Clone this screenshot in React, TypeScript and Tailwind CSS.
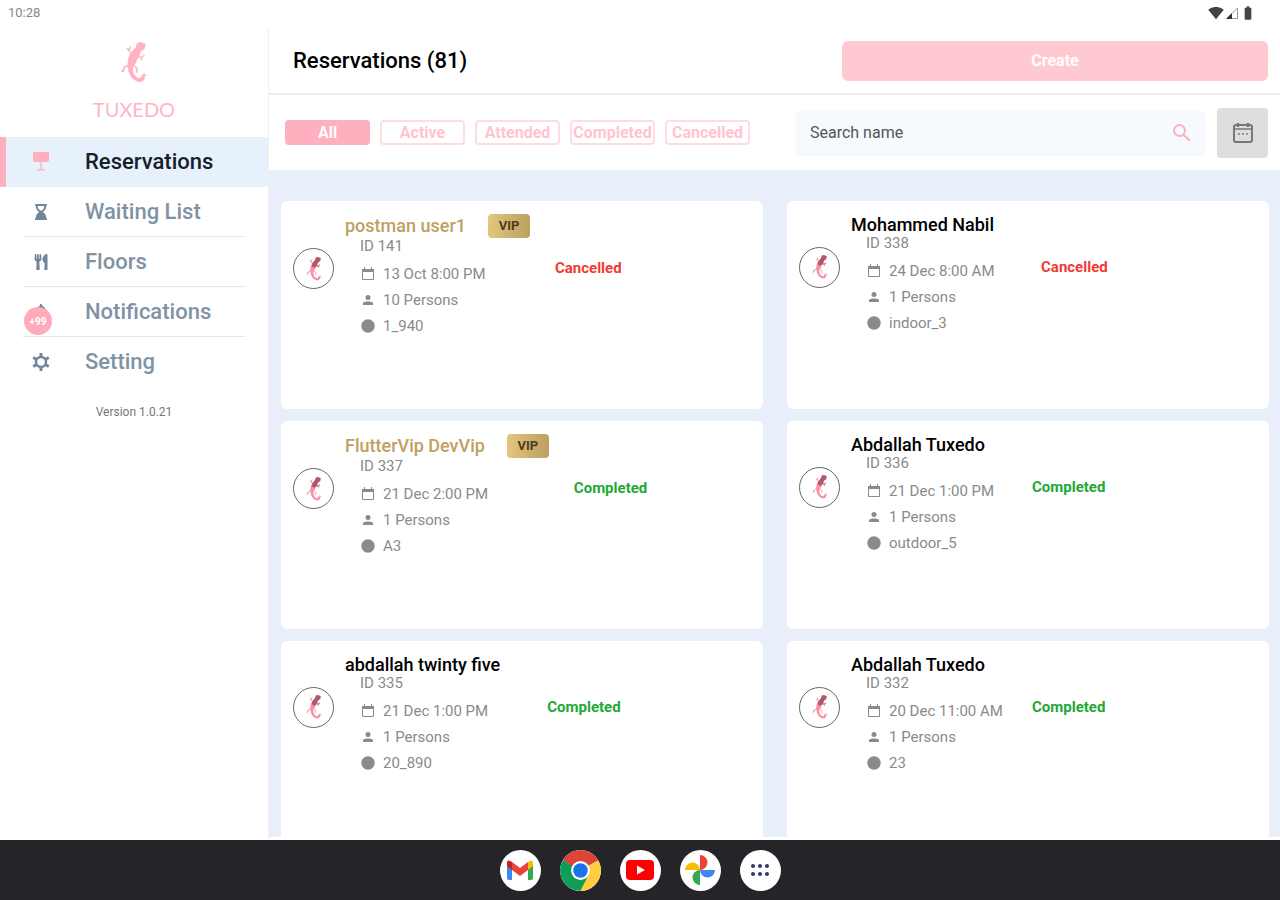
import React from 'react';
import {
  MdBatteryFull,
  MdCircle,
  MdNotifications,
  MdSearch,
  MdSignalWifi4Bar,
} from 'react-icons/md';
import { FaHourglassEnd, FaUtensils } from 'react-icons/fa';

type Status = 'Cancelled' | 'Completed';

interface Reservation {
  id: number;
  name: string;
  vip?: boolean;
  date: string;
  persons: number;
  table: string;
  status: Status;
}

const reservations: Reservation[] = [
  { id: 141, name: 'postman user1', vip: true, date: '13 Oct 8:00 PM', persons: 10, table: '1_940', status: 'Cancelled' },
  { id: 338, name: 'Mohammed Nabil', date: '24 Dec 8:00 AM', persons: 1, table: 'indoor_3', status: 'Cancelled' },
  { id: 337, name: 'FlutterVip DevVip', vip: true, date: '21 Dec 2:00 PM', persons: 1, table: 'A3', status: 'Completed' },
  { id: 336, name: 'Abdallah Tuxedo', date: '21 Dec 1:00 PM', persons: 1, table: 'outdoor_5', status: 'Completed' },
  { id: 335, name: 'abdallah twinty five', date: '21 Dec 1:00 PM', persons: 1, table: '20_890', status: 'Completed' },
  { id: 332, name: 'Abdallah Tuxedo', date: '20 Dec 11:00 AM', persons: 1, table: '23', status: 'Completed' },
];

const filters = ['All', 'Active', 'Attended', 'Completed', 'Cancelled'];

const Gecko: React.FC<{ className: string; head?: string }> = ({ className, head = 'currentColor' }) => (
  <svg className={className} viewBox="0 0 26 42" fill="none" stroke="currentColor" strokeLinecap="round" strokeLinejoin="round" aria-hidden="true">
    <path d="M13 9C9 11 7 15 7 19c-1 3-1 6 0 9 1 6 5 12 11 13 4 0 7-3 6-6l-3-1c0 2-1 3-3 3-4-1-6-5-6-9 0-3 3-6 4-9 2-4 2-7 0-9z" fill="currentColor" stroke="none" />
    <path d="M11 12L8 9l1-4M8 8L6 7M7 24l-4 2-1 4M3 27l-2 3M14 25l2 2v4M20 37l3-4 2 1" strokeWidth="1.600" />
    <path d="M16 14l4 2 3-2M20 16l1 2" stroke={head} strokeWidth="1.600" />
    <path d="M10 11l5-6 1-4 4-1 5 2-1 5-4 3-2 6-5 3-4-3z" fill={head} stroke="none" />
  </svg>
);

const TableIcon = () => (
  <svg className="w-4 h-5" viewBox="0 0 16 20" fill="currentColor" aria-hidden="true">
    <path d="M0 0h16v9l-2 1H2L0 9z" />
    <path d="M7 9h2v8H7zM4 17h8v2H4z" opacity=".7" />
  </svg>
);

const GearIcon = () => (
  <svg className="w-5 h-5" viewBox="0 0 20 20" fill="none" stroke="currentColor" aria-hidden="true">
    <circle cx="10" cy="10" r="5" strokeWidth="2.500" />
    <path d="M10 5V1M10 15v4M5.700 7.500L2.200 5.500M14.300 12.500l3.500 2M14.300 7.500l3.500-2M5.700 12.500l-3.500 2" strokeWidth="3" />
  </svg>
);

const DateIcon = () => (
  <svg className="w-4 h-[14px] shrink-0" viewBox="0 0 16 14" aria-hidden="true">
    <path d="M2.500 2.500h11v10h-11z" fill="none" stroke="currentColor" />
    <path d="M2 2h12v3H2zM4 0h1v2H4zM11 0h1v2h-1z" fill="currentColor" />
  </svg>
);

const PersonIcon = () => (
  <svg className="w-4 h-4 shrink-0" viewBox="0 0 16 16" fill="currentColor" aria-hidden="true">
    <circle cx="8" cy="5.500" r="2.500" />
    <path d="M3 13v-2c1-2 9-2 10 0v2z" />
  </svg>
);

const CalendarIcon = () => (
  <svg className="w-5 h-[22px]" viewBox="0 0 20 22" fill="none" stroke="currentColor" aria-hidden="true">
    <rect x="1" y="3" width="18" height="17" rx="2" strokeWidth="2" />
    <path d="M1 7h18" strokeWidth="1.500" />
    <path d="M5 1v4M15 1v4" strokeWidth="2.500" />
    <path d="M5 12h2M9 12h2M13 12h2" strokeWidth="2" opacity=".7" />
  </svg>
);

const navItems = [
  { label: 'Reservations', icon: <TableIcon />, active: true },
  { label: 'Waiting List', icon: <FaHourglassEnd className="w-4 h-4" /> },
  { label: 'Floors', icon: <FaUtensils className="w-4 h-4" /> },
  { label: 'Notifications', icon: <MdNotifications className="w-5 h-5" />, badge: '+99' },
  { label: 'Setting', icon: <GearIcon /> },
];

const StatusBar = () => (
  <div className="h-7 shrink-0 flex items-center justify-between pl-2 pr-6 pb-[2px] text-[#444]">
    <span className="text-[13px] text-[#888]">10:28</span>
    <div className="flex items-center gap-[2px]">
      <MdSignalWifi4Bar className="w-4 h-4" />
      <svg className="w-3 h-3" viewBox="0 0 12 12" aria-hidden="true">
        <path d="M1 11.500L11.500 1v10.500z" fill="none" stroke="#999" />
        <path d="M0 12l6-6v6z" fill="#333" />
      </svg>
      <MdBatteryFull className="w-4 h-4" />
    </div>
  </div>
);

const Sidebar = () => (
  <aside className="w-[269px] shrink-0 border-r border-[#f0f1f4] bg-white">
    <div className="h-[109px] pt-[14px] flex flex-col items-center text-[#ffb3c1]">
      <Gecko className="w-[26px] h-[41px]" />
      <span className="mt-3 font-['Lato',sans-serif] text-xl leading-7 text-[#fbb8c4]">TUXEDO</span>
    </div>
    <nav>
      <ul>
        {navItems.map((item, i) => (
          <li key={item.label}>
            <a
              href="#"
              aria-current={item.active ? 'page' : undefined}
              className={
                item.active
                  ? 'h-[50px] flex items-center border-l-[6px] border-[#ffb0bf] bg-[#e7f1fb] pl-[17px] text-[#ffb0bf]'
                  : 'h-[50px] flex items-center pl-[23px] text-[#71869b]'
              }
            >
              <span className="relative w-9 flex justify-center">
                {item.icon}
                {item.badge && (
                  <span className="absolute left-px top-[5px] w-7 h-7 rounded-full bg-[#ffabbb] flex items-center justify-center text-[10px] font-bold text-white">
                    {item.badge}
                  </span>
                )}
              </span>
              <span className={item.active ? 'ml-[26px] pb-[2px] text-[22px] font-medium text-[#16202b]' : 'ml-[26px] pb-[2px] text-[22px] font-medium text-[#8093a5]'}>
                {item.label}
              </span>
            </a>
            {i > 0 && i < navItems.length - 1 && <hr className="-mt-px ml-[23px] mr-[23px] border-[#e4e5e8]" />}
          </li>
        ))}
      </ul>
    </nav>
    <p className="mt-4 text-center text-xs leading-[18px] text-[#777]">Version 1.0.21</p>
  </aside>
);

const ReservationCard: React.FC<{ item: Reservation }> = ({ item }) => (
  <article className="h-[208px] rounded-md bg-white pl-3 pt-[13px] flex items-start">
    <div className="flex items-center">
      <div className="mb-4 w-[41px] h-[41px] shrink-0 rounded-full border border-[#666] flex items-center justify-center text-[#f792a6]">
        <Gecko className="w-4 h-6" head="#b3586b" />
      </div>
      <div className="ml-[11px]">
        <div className={item.vip ? 'h-6 flex items-center gap-[22px]' : 'h-[21px] flex items-center pr-[22px]'}>
          <h2 className={item.vip ? 'text-lg font-medium text-[#c0a062]' : 'text-lg font-medium text-black'}>{item.name}</h2>
          {item.vip && (
            <span className="w-[42px] h-6 rounded bg-linear-to-r from-[#e3c67e] to-[#bd9f5f] flex items-center justify-center text-[13px] font-bold text-[#4d3d1c]">
              VIP
            </span>
          )}
        </div>
        <div className="w-0 whitespace-nowrap pl-[15px] text-[15px] text-[#8a8a8a]">
          <p className="leading-4 mb-[7px]">ID {item.id}</p>
          <p className="h-[26px] flex items-center gap-[7px]">
            <DateIcon />
            {item.date}
          </p>
          <p className="h-[26px] flex items-center gap-[7px]">
            <PersonIcon />
            {item.persons} Persons
          </p>
          <p className="h-[26px] flex items-center gap-[7px]">
            <MdCircle className="w-4 h-4 shrink-0" />
            {item.table}
          </p>
        </div>
      </div>
      <span className={item.status === 'Cancelled' ? 'ml-[25px] mb-4 text-[15px] font-bold text-[#f03a34]' : 'ml-[25px] mb-4 text-[15px] font-bold text-[#22a935]'}>
        {item.status}
      </span>
    </div>
  </article>
);

const GmailIcon = () => (
  <svg className="w-7 h-5" viewBox="0 0 28 20" aria-hidden="true">
    <path d="M1 3l5 4v13H3a2 2 0 0 1-2-2z" fill="#4285f4" />
    <path d="M27 3l-5 4v13h3a2 2 0 0 0 2-2z" fill="#34a853" />
    <path d="M22 2l2-1c2-1 3 0 3 2v3l-5 4z" fill="#fbbc04" />
    <path d="M6 2L4 1C2 0 1 1 1 3v3l5 4z" fill="#c5221f" />
    <path d="M6 2l8 6 8-6v8l-8 6-8-6z" fill="#ea4335" />
  </svg>
);

const ChromeIcon = () => (
  <svg className="w-full h-full" viewBox="0 0 48 48" aria-hidden="true">
    <path d="M24 24L3.200 12A24 24 0 0 1 44.800 12z" fill="#db4437" />
    <path d="M24 24L44.800 12A24 24 0 0 1 24 48z" fill="#ffcd40" />
    <path d="M24 24v24A24 24 0 0 1 3.200 12z" fill="#0f9d58" />
    <path d="M24 13h21.300L44.800 12H10l4.500 17.500z" fill="#db4437" />
    <path d="M3.200 12l11.300 17.500L24 24z" fill="#0f9d58" />
    <path d="M33.500 29.500L24 48l-3-14z" fill="#ffcd40" />
    <path d="M14.500 29.500L24 35l9.500-5.500L24 48z" fill="#0f9d58" />
    <path d="M33.500 29.500L24 48a24 24 0 0 0 20-11z" fill="#ffcd40" />
    <circle cx="24" cy="24" r="11" fill="#fff" />
    <circle cx="24" cy="24" r="8.500" fill="#1a73e8" />
  </svg>
);

const YoutubeIcon = () => (
  <svg className="w-7 h-5" viewBox="0 0 28 20" aria-hidden="true">
    <rect width="28" height="20" rx="4" fill="#f00" />
    <path d="M11 5.500l8 4.500-8 4.500z" fill="#fff" />
  </svg>
);

const PhotosIcon = () => (
  <svg className="w-[30px] h-[30px]" viewBox="0 0 30 30" aria-hidden="true">
    <path d="M15 0a7.500 7.500 0 0 1 0 15z" fill="#ea4335" />
    <path d="M30 15a7.500 7.500 0 0 1-15 0z" fill="#4285f4" />
    <path d="M15 30a7.500 7.500 0 0 1 0-15z" fill="#34a853" />
    <path d="M0 15a7.500 7.500 0 0 1 15 0z" fill="#fbbc04" />
  </svg>
);

const AppsIcon = () => (
  <svg className="w-5 h-[14px]" viewBox="0 0 20 14" fill="#33356b" aria-hidden="true">
    <circle cx="3" cy="3" r="2" />
    <circle cx="10" cy="3" r="2" />
    <circle cx="17" cy="3" r="2" />
    <circle cx="3" cy="11" r="2" />
    <circle cx="10" cy="11" r="2" />
    <circle cx="17" cy="11" r="2" />
  </svg>
);

const dockApps = [
  { name: 'Gmail', icon: <GmailIcon /> },
  { name: 'Chrome', icon: <ChromeIcon /> },
  { name: 'YouTube', icon: <YoutubeIcon /> },
  { name: 'Photos', icon: <PhotosIcon /> },
  { name: 'All apps', icon: <AppsIcon /> },
];

const App: React.FC = () => {
  return (
    <div className="h-screen flex flex-col overflow-hidden bg-white font-['Roboto',sans-serif]">
      <StatusBar />

      <div className="flex-1 min-h-0 flex">
        <Sidebar />

        <main className="flex-1 min-w-0 flex flex-col pb-[3px]">
          <header className="h-[67px] shrink-0 flex items-center justify-between border-b-2 border-[#ececec] pl-6 pr-3">
            <h1 className="text-[22px] font-medium text-black">Reservations (81)</h1>
            <button type="button" className="w-[426px] h-10 rounded-md bg-[#ffc9d2] text-base font-bold text-white">
              Create
            </button>
          </header>

          <div className="h-[75px] shrink-0 flex items-center pl-4 pr-3">
            <div className="flex gap-[10px]">
              {filters.map((filter, i) => (
                <button
                  key={filter}
                  type="button"
                  className={
                    i === 0
                      ? 'w-[85px] h-[25px] rounded bg-[#ffb0bf] text-base leading-5 font-bold text-white'
                      : 'w-[85px] h-[25px] rounded border-2 border-[#ffdbe2] text-base leading-5 font-bold text-[#ffc4cf] flex items-center justify-center'
                  }
                >
                  {filter}
                </button>
              ))}
            </div>
            <label className="ml-[46px] flex-1 h-[46px] rounded-md bg-[#f6f9fd] flex items-center pl-[14px] pr-3">
              <input
                type="text"
                aria-label="Search name"
                placeholder="Search name"
                className="flex-1 min-w-0 bg-transparent text-base text-[#444] placeholder:text-[#555] outline-none"
              />
              <MdSearch className="w-6 h-6 text-[#ffb0bf]" />
            </label>
            <button type="button" aria-label="Pick a date" className="ml-[11px] w-[51px] h-[50px] rounded bg-[#dedede] flex items-center justify-center text-[#777]">
              <CalendarIcon />
            </button>
          </div>

          <section className="flex-1 min-h-0 overflow-hidden bg-[#e9effa] pl-3 pr-[11px] pt-[31px]">
            <div className="grid grid-cols-2 gap-x-6 gap-y-3">
              {reservations.map((item) => (
                <ReservationCard key={item.id} item={item} />
              ))}
            </div>
          </section>
        </main>
      </div>

      <footer className="h-[60px] shrink-0 flex items-center justify-center gap-[19px] bg-[#252529]">
        {dockApps.map((app) => (
          <button key={app.name} type="button" aria-label={app.name} className="w-[41px] h-[41px] rounded-full overflow-hidden bg-white flex items-center justify-center">
            {app.icon}
          </button>
        ))}
      </footer>
    </div>
  );
};

export default App;
